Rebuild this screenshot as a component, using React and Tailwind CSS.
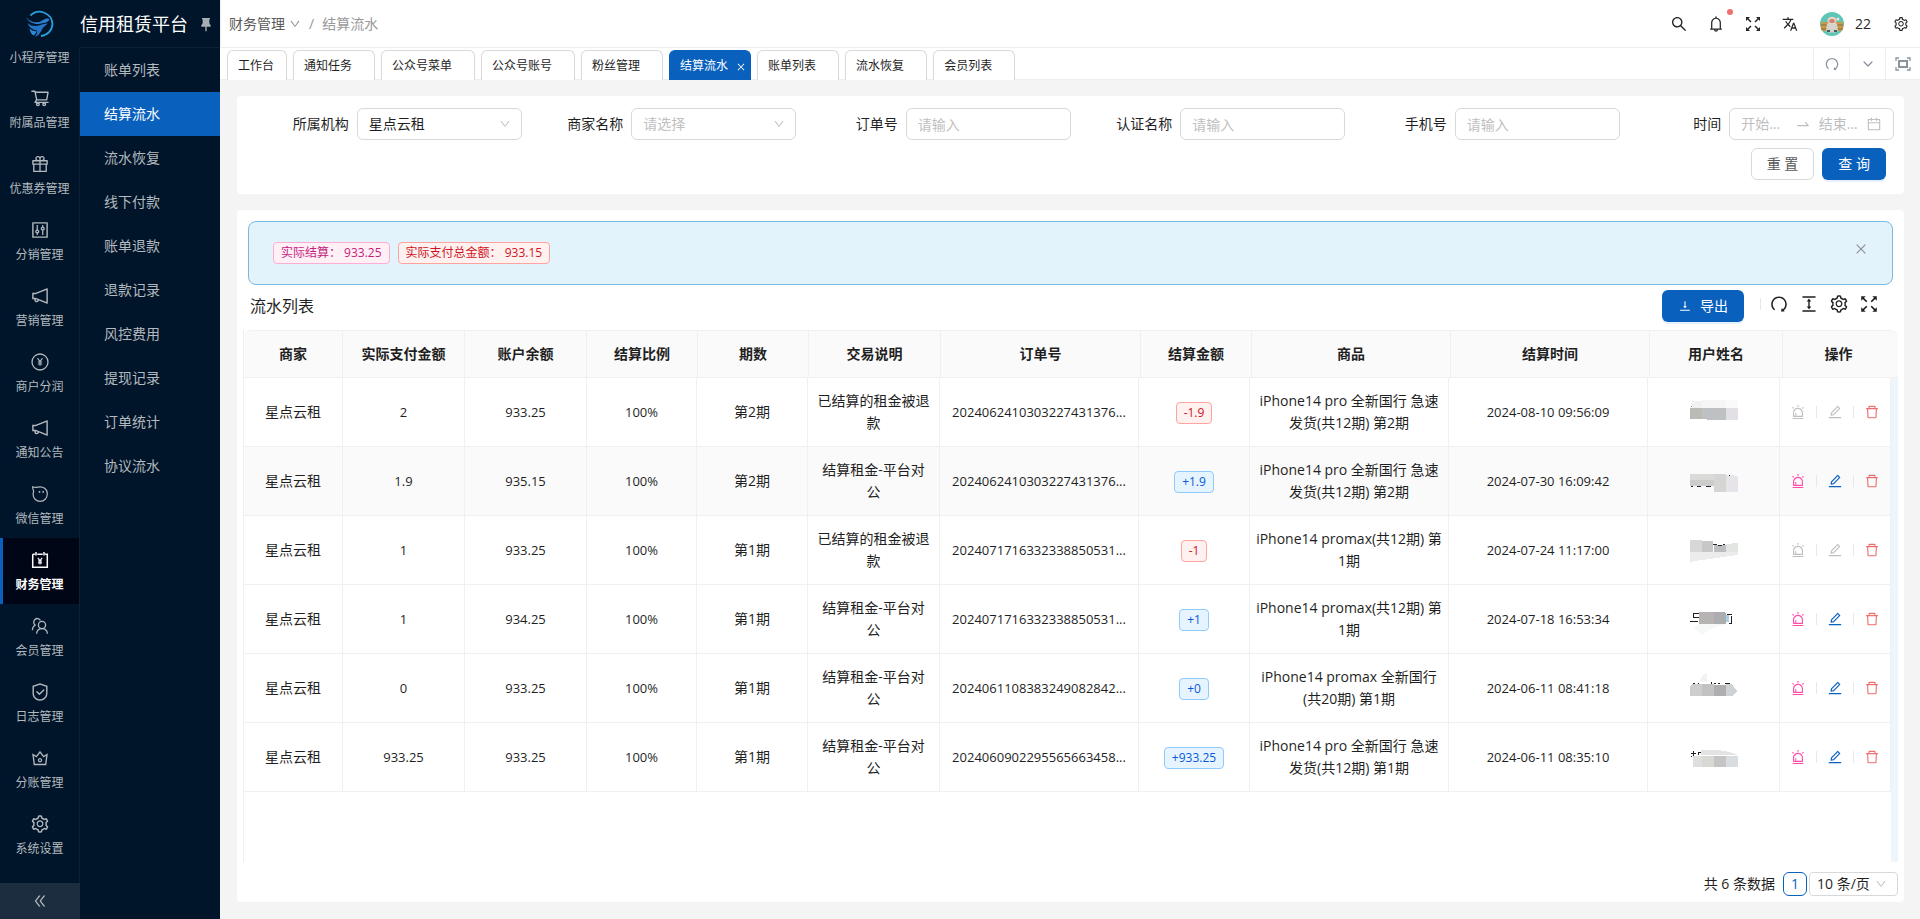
import React, { useState } from 'react';
import clsx from 'clsx';
import {
    AiOutlineAlert,
    AiOutlineBell,
    AiOutlineCalendar,
    AiOutlineClose,
    AiOutlineColumnHeight,
    AiOutlineControl,
    AiOutlineCrown,
    AiOutlineDelete,
    AiOutlineDoubleLeft,
    AiOutlineDown,
    AiOutlineEdit,
    AiOutlineGift,
    AiOutlineNotification,
    AiOutlineRedo,
    AiOutlineSafety,
    AiOutlineSearch,
    AiOutlineSetting,
    AiOutlineShoppingCart,
    AiOutlineSwapRight,
    AiOutlineVerticalAlignBottom
} from 'react-icons/ai';
import { IoChevronDown } from 'react-icons/io5';
import { MdTranslate } from 'react-icons/md';
import { RiPushpin2Fill } from 'react-icons/ri';

const YuanCircle = ({ className }) => (
    <svg viewBox="-1 -1 20 20" fill="none" stroke="currentColor" className={className}>
        <circle cx="9" cy="9" r="8" strokeWidth="1.3" />
        <path d="M6.5 5.2 9 8.6l2.5-3.4M9 8.6v4.2M6.8 9h4.4M6.8 11h4.4" strokeWidth="1.1" />
    </svg>
);

const Bubble = ({ className }) => (
    <svg viewBox="-1 -1 20 20" fill="none" stroke="currentColor" strokeWidth="1.2" className={className}>
        <path d="M1.6 1.8c1.8.7 3.4.7 5 .4 5.8-1.2 9.7 2 9.7 6.8 0 4.2-3.2 7.3-7.2 7.3-4.1 0-7-3.1-7-7 0-1.2.2-2 .6-2.9-.7-1.5-1-3-1.1-4.6Z" />
        <path d="M8.5 6v1.8M12.2 6v1.8" strokeWidth="1.5" />
    </svg>
);

const YuanCalendar = ({ className }) => (
    <svg viewBox="-1 -1 20 20" fill="none" stroke="currentColor" className={className}>
        <path d="M1.7 3.2h2.2M6.3 3.2h5.4M14.1 3.2h2.2v13H1.7v-13M5 1v3.4M13 1v3.4" strokeWidth="1.5" />
        <path d="M6.8 6.8 9 9.6l2.2-2.8M9 9.6v4M7 10h4M7 11.9h4" strokeWidth="1.1" />
    </svg>
);

const Members = ({ className }) => (
    <svg viewBox="-1 -1 20 20" fill="none" stroke="currentColor" strokeWidth="1.3" className={className}>
        <circle cx="11" cy="8" r="3.6" />
        <path d="M5.6 16.8c.2-3.2 2.5-5.2 5.4-5.2s5.2 2 5.4 5.2" />
        <path d="M9.4 3.3A3.6 3.6 0 1 0 4 7.9M1.4 13.2c.1-2.7 1.3-4.6 3.3-5.4" />
    </svg>
);

const ArrowsOut = ({ className }) => (
    <svg viewBox="0 0 18 18" fill="none" stroke="currentColor" strokeWidth="1.5" className={className}>
        <path d="M7 7 3 3M11 7l4-4M7 11l-4 4M11 11l4 4" />
        <path d="M2 2h4L2 6ZM16 2h-4l4 4ZM2 16h4l-4-4ZM16 16h-4l4-4Z" fill="currentColor" stroke="none" />
    </svg>
);

const ScreenFull = ({ className }) => (
    <svg viewBox="0 0 16 14" fill="none" stroke="currentColor" className={className}>
        <rect x="4" y="4" width="8" height="6" strokeWidth="2" />
        <path d="M1 4V1h3M12 1h3v3M15 10v3h-3M4 13H1v-3" strokeWidth="1.3" />
    </svg>
);

const Logo = () => (
    <svg viewBox="0 0 30 30" className="h-[30px] w-[30px]">
        <path d="M5.5 6.5A13 13 0 0 1 27.5 15a12.5 12.5 0 0 1-11.5 12" fill="none" stroke="#2a9fe0" strokeWidth="1.8" />
        <path d="M1 8c3 4 7 6 13 5 3-.5 4-3 8-3.5 2-.2 3 .8 2 2-3 3-8 2.5-10 3.500-5 .5-11-2-13-7Z" fill="#2c7fd0" />
        <path d="M2.5 14c3 3 8 4 13 2 3-1 5-1.500 7-1.500-1 2-4 3-5 5-1.500 3-3 7-8 8.500 2-2 3-4 2.500-6.500C8 21 4 18.500 2.500 14Z" fill="#2573c6" />
        <path d="M4.5 19.5c2 2 5 3 7 2.500-.5 2-1.500 3.500-3 4.500-2-1-3.500-4-4-7Z" fill="#2b8ad8" />
    </svg>
);

const Avatar = () => (
    <svg viewBox="0 0 24 24" className="h-6 w-6 rounded-full">
        <rect width="24" height="24" fill="#5fc5b6" />
        <path d="M1 10h22v9H1Z" fill="#c99a4e" />
        <path d="M1 13h22M1 17h22" stroke="#8f6a35" />
        <path d="M7 12c2-2 8-2 10 0l1 7c-2 2-10 2-12 0Z" fill="#d6d3cf" />
        <path d="M7 18h3v2H7ZM14 18h3v2h-3Z" fill="#4c5a55" />
        <ellipse cx="12" cy="8.5" rx="4.500" ry="3.800" fill="#ecd3c6" />
        <ellipse cx="12" cy="9" rx="2.800" ry="2" fill="#c98672" />
        <circle cx="18" cy="7" r="1.500" fill="#e9e4d8" />
    </svg>
);

const MENU = [
    { name: '小程序管理', Icon: null },
    { name: '附属品管理', Icon: AiOutlineShoppingCart },
    { name: '优惠券管理', Icon: AiOutlineGift },
    { name: '分销管理', Icon: AiOutlineControl },
    { name: '营销管理', Icon: AiOutlineNotification },
    { name: '商户分润', Icon: YuanCircle },
    { name: '通知公告', Icon: AiOutlineNotification },
    { name: '微信管理', Icon: Bubble },
    { name: '财务管理', Icon: YuanCalendar },
    { name: '会员管理', Icon: Members },
    { name: '日志管理', Icon: AiOutlineSafety },
    { name: '分账管理', Icon: AiOutlineCrown },
    { name: '系统设置', Icon: AiOutlineSetting }
];

const SUB_MENU = ['账单列表', '结算流水', '流水恢复', '线下付款', '账单退款', '退款记录', '风控费用', '提现记录', '订单统计', '协议流水'];

const TABS = ['工作台', '通知任务', '公众号菜单', '公众号账号', '粉丝管理', '结算流水', '账单列表', '流水恢复', '会员列表'];

// the header also spans the scrollbar gutter, so its columns differ slightly
const COLUMNS = [
    { title: '商家', head: 'w-[99px]', body: 'w-[99px]' },
    { title: '实际支付金额', head: 'w-[122px]', body: 'w-[122px]' },
    { title: '账户余额', head: 'w-[122px]', body: 'w-[122px]' },
    { title: '结算比例', head: 'w-[111px]', body: 'w-[110px]' },
    { title: '期数', head: 'w-[111px]', body: 'w-[111px]' },
    { title: '交易说明', head: 'w-[132px]', body: 'w-[132px]' },
    { title: '订单号', head: 'w-[200px]', body: 'w-[199px]' },
    { title: '结算金额', head: 'w-[111px]', body: 'w-[111px]' },
    { title: '商品', head: 'w-[199px]', body: 'w-[199px]' },
    { title: '结算时间', head: 'w-[199px]', body: 'w-[199px]' },
    { title: '用户姓名', head: 'w-[133px]', body: 'w-[132px]' },
    { title: '操作', head: 'w-[115px]', body: 'w-[111px]' }
];

const ROWS = [
    { paid: '2', balance: '933.25', period: '第2期', note: '已结算的租金被退款', order: '2024062410303227431376...', amount: '-1.9', goods: 'iPhone14 pro 全新国行 急速\n发货(共12期) 第2期', time: '2024-08-10 09:56:09' },
    { paid: '1.9', balance: '935.15', period: '第2期', note: '结算租金-平台对公', order: '2024062410303227431376...', amount: '+1.9', goods: 'iPhone14 pro 全新国行 急速\n发货(共12期) 第2期', time: '2024-07-30 16:09:42' },
    { paid: '1', balance: '933.25', period: '第1期', note: '已结算的租金被退款', order: '2024071716332338850531...', amount: '-1', goods: 'iPhone14 promax(共12期) 第\n1期', time: '2024-07-24 11:17:00' },
    { paid: '1', balance: '934.25', period: '第1期', note: '结算租金-平台对公', order: '2024071716332338850531...', amount: '+1', goods: 'iPhone14 promax(共12期) 第\n1期', time: '2024-07-18 16:53:34' },
    { paid: '0', balance: '933.25', period: '第1期', note: '结算租金-平台对公', order: '2024061108383249082842...', amount: '+0', goods: 'iPhone14 promax 全新国行\n(共20期) 第1期', time: '2024-06-11 08:41:18' },
    { paid: '933.25', balance: '933.25', period: '第1期', note: '结算租金-平台对公', order: '2024060902295565663458...', amount: '+933.25', goods: 'iPhone14 pro 全新国行 急速\n发货(共12期) 第1期', time: '2024-06-11 08:35:10' }
];

// [path, colour] pairs for the masked customer names
const MASKS = [
    [['M2 5h10v7H2Z', '#f2f2f2'], ['M12 4h24v8H12Z', '#f6f6f6'], ['M36 4h12v8H36Z', '#fafafa'], ['M0 12h12v11H0Z', '#bbbbb6'], ['M12 12h24v12H17v-1h-5Z', '#bec1c1'], ['M36 12h12v12H36Z', '#e3e0e5'], ['M1 10h1v1H1Z', '#b57a3a']],
    [['M0 9h24v6H0Z', '#dadad9'], ['M24 9h12v6H24Z', '#d5d5d4'], ['M0 15h24v6H0Z', '#cccdca'], ['M24 15h12v12H24Z', '#d5d5d4'], ['M36 10h7l5 2v15H36Z', '#e6e4e8'], ['M1 21h2v1H1ZM7 21h4v1H7ZM16 21h5v1h-5ZM39 10h1v1h-1Z', '#2b2b35']],
    [['M0 6h12v12H0Z', '#d8d6d7'], ['M12 7h11v11H12Z', '#c8c7c8'], ['M24 11h12v7H24Z', '#bbbfbf'], ['M36 10l12-1v9H36Z', '#e3e5e2'], ['M0 18h48v3L12 26l-8 1-4 2Z', '#ececec'], ['M23 10h4v1h-4ZM28 11h4v1h-4ZM33 10h2v1h-2Z', '#2b2b35']],
    [['M3 10h6v1H4v3h5v1H3ZM0 18h8v1H0Z', '#1f1f1f'], ['M9 9h15v12H9Z', '#b7b3b3'], ['M24 9h9l3 1v11H24Z', '#adadb0'], ['M37 11h5v1h-5ZM41 13h1v8h-3v-1h2Z', '#1f1f1f'], ['M36 12h3v7h-3Z', '#a9cfe6'], ['M8 21h27l-14 5-9 6-8-6Z', '#f7f8f8']],
    [['M11 5l4-3h2v8h-7Z', '#f2f2f2'], ['M3 11h2v1H3ZM8 11h1v2H8ZM21 10h1v3h-1ZM24 11h2v1h-2ZM28 11h2v1h-2ZM35 11h5v1h-5Z', '#1f1f1f'], ['M0 14l2-2h10v12H0Z', '#cfcdcb'], ['M12 12h12v12H12Z', '#c3c2c2'], ['M24 13h12v11H24Z', '#aeadaf'], ['M36 12h6l5 7-4 5h-7Z', '#cdd2d4']],
    [['M1 12h5v1H1ZM3 10h1v6H3ZM1 15h1v1H1ZM8 11h3v1H8ZM8 11h1v3H8ZM37 11h4v1h-4Z', '#1f1f1f'], ['M11 9h17l12 2 8 3H11Z', '#e3e3e4'], ['M3 15h9v11H3Z', '#dfdfe0'], ['M12 15h12v11H12Z', '#d8d8d4'], ['M24 15h12v11H24Z', '#c6c5c6'], ['M36 15h12v11H36Z', '#d9dde0']]
];

const NameMask = ({ shapes }) => (
    <svg viewBox="0 0 48 32" className="mx-auto h-8 w-12" shapeRendering="crispEdges">
        {shapes.map(([d, fill]) => (
            <path key={d} d={d} fill={fill} />
        ))}
    </svg>
);

const Tag = ({ color, children }) => (
    <span
        className={clsx(
            'inline-block h-[22px] rounded border px-[7px] text-xs leading-5 whitespace-pre',
            color === 'pink' && 'border-[#ffadd2] bg-[#fff0f6] text-[#c41d7f]',
            color === 'red' && 'border-[#ffa39e] bg-[#fff1f0] text-[#cf1322]',
            color === 'blue' && 'border-[#91caff] bg-[#e6f4ff] text-[#0958d9]'
        )}
    >
        {children}
    </span>
);

const fieldClass = 'h-8 w-full rounded-md border border-[#d9d9d9] bg-white px-[11px] text-sm placeholder:text-[#bfbfbf] outline-none';

const Field = ({ label, id, children }) => (
    <div className="grid grid-cols-[2fr_3fr] items-center">
        <label htmlFor={id} className="pr-2 text-right text-sm">{label}</label>
        <div className="relative">{children}</div>
    </div>
);

const SelectField = ({ label, id, options, muted }) => (
    <Field label={label} id={id}>
        <select id={id} className={clsx(fieldClass, 'appearance-none', muted && 'text-[#bfbfbf]')}>
            {options.map((option) => (
                <option key={option}>{option}</option>
            ))}
        </select>
        <AiOutlineDown className="pointer-events-none absolute top-[10px] right-[11px] h-3 w-3 text-[#bfbfbf]" />
    </Field>
);

const Sidebar = () => (
    <aside className="flex shrink-0 bg-[#001529] text-[#b3b9bf]">
        <div className="flex w-20 flex-col">
            <div className="flex h-12 shrink-0 items-center justify-center">
                <Logo />
            </div>
            <nav className="flex-1 overflow-hidden border-r border-[#0d2135]">
                {MENU.map(({ name, Icon }) => (
                    <a
                        key={name}
                        href="#"
                        className={clsx(
                            'flex flex-col items-center text-xs leading-5',
                            Icon ? 'h-[66px] gap-[5px] pt-3' : 'h-7',
                            name === '财务管理' && 'border-l-[3px] border-[#0960bd] bg-[#000616] pr-[3px] font-bold text-white'
                        )}
                    >
                        {Icon && <Icon className="h-5 w-5 shrink-0" />}
                        {name}
                    </a>
                ))}
            </nav>
            <button aria-label="收起菜单" className="flex h-9 items-center justify-center bg-[#1b2d3f]">
                <AiOutlineDoubleLeft className="h-4 w-4" />
            </button>
        </div>
        <div className="w-[140px]">
            <div className="flex h-12 items-center justify-between border-b border-[#0d2135] pr-1.5">
                <h1 className="text-lg text-white">信用租赁平台</h1>
                <RiPushpin2Fill className="h-4 w-4 text-[#a6adb4]" />
            </div>
            <nav>
                {SUB_MENU.map((name) => (
                    <a key={name} href="#" className={clsx('flex h-11 items-center pl-6 text-sm', name === '结算流水' && 'bg-[#0960bd] text-white')}>
                        {name}
                    </a>
                ))}
            </nav>
        </div>
    </aside>
);

const Header = () => (
    <header className="flex h-12 shrink-0 items-center justify-between border-b border-l border-[#eee] bg-white pr-[11px] pl-2">
        <nav className="flex items-center text-sm text-[#999]">
            <a href="#" className="flex items-center gap-1 text-[#595959]">
                财务管理 <AiOutlineDown className="h-3 w-3 text-[#8c8c8c]" />
            </a>
            <span className="mx-2">/</span>
            <span>结算流水</span>
        </nav>
        <div className="flex items-center text-[#262626]">
            <button aria-label="搜索" className="mr-[19px]"><AiOutlineSearch className="h-[18px] w-[18px]" /></button>
            <button aria-label="通知" className="relative mr-[19px]">
                <AiOutlineBell className="h-[18px] w-[18px]" />
                <span className="absolute -top-1.5 -right-2 h-1.5 w-1.5 rounded-full bg-[#ed6f6f]" />
            </button>
            <button aria-label="全屏" className="mr-5"><ArrowsOut className="h-[18px] w-[18px]" /></button>
            <button aria-label="语言" className="mr-[22px]"><MdTranslate className="h-4 w-4" /></button>
            <Avatar />
            <span className="mr-[22px] ml-[11px] text-sm">22</span>
            <button aria-label="设置"><AiOutlineSetting className="h-4 w-4" /></button>
        </div>
    </header>
);

const TabBar = ({ active, onSelect }) => (
    <div className="flex h-8 shrink-0 items-end justify-between border-b border-[#eee] bg-white pl-[7px]">
        <div className="-mb-px flex gap-1.5">
            {TABS.map((name) => (
                <button
                    key={name}
                    onClick={() => onSelect(name)}
                    className={clsx(
                        'flex h-[30px] items-center rounded-t-md border border-b-0 pl-[10px] text-xs',
                        name === active ? 'border-[#0960bd] bg-[#0960bd] pr-1 text-white' : 'border-[#d9d9d9] bg-white text-[#1f1f1f]',
                        name !== active && (name === '工作台' ? 'pr-3' : 'pr-[22px]')
                    )}
                >
                    {name}
                    {name === active && <AiOutlineClose className="mt-0.5 ml-2 h-[10px] w-[10px]" />}
                </button>
            ))}
        </div>
        <div className="flex h-[30px] text-[#8b93a1]">
            <button aria-label="刷新" className="flex w-9 items-center justify-center border-l border-[#eee]"><AiOutlineRedo className="h-4 w-4" /></button>
            <button aria-label="更多" className="flex w-9 items-center justify-center border-l border-[#eee]"><IoChevronDown className="h-[14px] w-[14px]" /></button>
            <button aria-label="内容全屏" className="flex w-[35px] items-center justify-center border-l border-[#eee]"><ScreenFull className="h-[14px] w-4" /></button>
        </div>
    </div>
);

const SearchForm = () => (
    <form className="rounded-sm bg-white px-[10px] pt-3 pb-[14px]" onSubmit={(e) => e.preventDefault()}>
        <div className="grid grid-cols-6">
            <SelectField label="所属机构" id="org" options={['星点云租']} />
            <SelectField label="商家名称" id="merchant" options={['请选择']} muted />
            <Field label="订单号" id="orderNo"><input id="orderNo" className={fieldClass} placeholder="请输入" /></Field>
            <Field label="认证名称" id="realName"><input id="realName" className={fieldClass} placeholder="请输入" /></Field>
            <Field label="手机号" id="phone"><input id="phone" className={fieldClass} placeholder="请输入" /></Field>
            <Field label="时间" id="startDate">
                <div className="flex h-8 items-center rounded-md border border-[#d9d9d9] px-[11px] text-sm text-[#bfbfbf]">
                    <input id="startDate" className="w-0 flex-1 text-ellipsis outline-none placeholder:text-[#bfbfbf]" placeholder="开始日期" />
                    <AiOutlineSwapRight className="mx-2 h-4 w-4 shrink-0" />
                    <input aria-label="结束时间" className="w-0 flex-1 text-ellipsis outline-none placeholder:text-[#bfbfbf]" placeholder="结束日期" />
                    <AiOutlineCalendar className="ml-0.5 h-4 w-4 shrink-0" />
                </div>
            </Field>
        </div>
        <div className="mt-2 flex justify-end gap-2 pr-2">
            <button type="reset" className="h-8 rounded-md border border-[#d9d9d9] px-[15px] text-sm whitespace-pre text-[#595959]">重 置</button>
            <button type="submit" className="h-8 rounded-md bg-[#0960bd] px-4 text-sm whitespace-pre text-white shadow-[0_2px_0_rgba(5,115,255,0.1)]">查 询</button>
        </div>
    </form>
);

const Columns = ({ part }) => (
    <colgroup>
        {COLUMNS.map((column) => (
            <col key={column.title} className={column[part]} />
        ))}
    </colgroup>
);

const Divider = () => <span className="mx-[10px] h-3 w-px bg-[#e8e8e8]" />;

const RecordTable = () => (
    <div className="flex flex-1 flex-col border-l border-[#f0f0f0]">
        <table className="w-full table-fixed border-separate border-spacing-0 text-sm">
            <Columns part="head" />
            <thead>
                <tr>
                    {COLUMNS.map(({ title }) => (
                        <th key={title} className="h-12 border-t border-r border-b border-[#f0f0f0] bg-[#fafafa] font-bold first:rounded-tl-lg last:rounded-tr-lg last:border-r-0 last:pr-1">
                            {title}
                        </th>
                    ))}
                </tr>
            </thead>
        </table>
        <div className="flex-1 border-r-[7px] border-r-[#eef6fc]">
            <table aria-label="流水列表" className="w-full table-fixed border-separate border-spacing-0 text-center text-sm leading-[22px]">
                <Columns part="body" />
                <tbody className="[&_td]:border-r [&_td]:border-b [&_td]:border-[#f0f0f0] [&_td]:px-2 [&_td]:py-3">
                    {ROWS.map((row, i) => {
                        const locked = row.amount.startsWith('-');
                        return (
                            <tr key={row.time} className={clsx('h-[69px]', i === 1 && 'bg-[#fafafa]')}>
                                <td>星点云租</td>
                                <td className="text-[13px]">{row.paid}</td>
                                <td className="text-[13px]">{row.balance}</td>
                                <td className="text-[13px]">100%</td>
                                <td>{row.period}</td>
                                <td>{row.note}</td>
                                <td className="text-[13px] whitespace-nowrap">{row.order}</td>
                                <td><Tag color={locked ? 'red' : 'blue'}>{row.amount}</Tag></td>
                                <td><div className="-mx-1 whitespace-pre">{row.goods}</div></td>
                                <td className="text-[13px] whitespace-nowrap">{row.time}</td>
                                <td><NameMask shapes={MASKS[i]} /></td>
                                <td>
                                    <div className="flex items-center justify-center">
                                        <button aria-label="提醒" disabled={locked} className="text-[#ff4da9] disabled:text-[#bfbfbf]"><AiOutlineAlert className="h-4 w-4" /></button>
                                        <Divider />
                                        <button aria-label="编辑" disabled={locked} className="text-[#0960bd] disabled:text-[#bfbfbf]"><AiOutlineEdit className="h-4 w-4" /></button>
                                        <Divider />
                                        <button aria-label="删除" className="text-[#ed6f6f]"><AiOutlineDelete className="h-4 w-4" /></button>
                                    </div>
                                </td>
                            </tr>
                        );
                    })}
                </tbody>
            </table>
        </div>
    </div>
);

const App = () => {
    const [activeTab, setActiveTab] = useState('结算流水');

    return (
        <div className="flex min-h-screen bg-[#f4f4f4] font-['Open_Sans','Noto_Sans_CJK_SC',sans-serif] text-[#1f1f1f] [&_button]:cursor-pointer">
            <Sidebar />
            <div className="flex min-w-0 flex-1 flex-col">
                <Header />
                <TabBar active={activeTab} onSelect={setActiveTab} />
                <main className="flex flex-1 flex-col gap-4 px-4 pt-4 pb-[17px] pl-[17px]">
                    <SearchForm />
                    <section className="flex flex-1 flex-col rounded-sm bg-white px-1.5 pt-[11px] pb-1.5">
                        <div className="mx-[5px] flex h-16 items-center gap-2 rounded-lg border border-[#7ab8e0] bg-[#e2f3fc] px-6">
                            <Tag color="pink">实际结算： 933.25</Tag>
                            <Tag color="red">实际支付总金额： 933.15</Tag>
                            <button aria-label="关闭" className="mb-2 ml-auto text-[#8c8c8c]"><AiOutlineClose className="h-[14px] w-[14px]" /></button>
                        </div>
                        <div className="flex items-center px-[7px] pt-[5px] pb-2">
                            <h2 className="flex-1 text-base">流水列表</h2>
                            <button className="flex h-8 items-center gap-2 rounded-md bg-[#0960bd] px-4 text-sm text-white shadow-[0_2px_0_rgba(5,115,255,0.1)]">
                                <AiOutlineVerticalAlignBottom className="h-[14px] w-[14px]" />
                                导出
                            </button>
                            <div className="mb-1 ml-4 flex items-center gap-[10px] pr-3">
                                <span className="-mr-0.5 h-3 w-px bg-[#e8e8e8]" />
                                <button aria-label="刷新"><AiOutlineRedo className="h-5 w-5" /></button>
                                <button aria-label="密度"><AiOutlineColumnHeight className="h-5 w-5" /></button>
                                <button aria-label="列设置"><AiOutlineSetting className="h-5 w-5" /></button>
                                <button aria-label="全屏"><ArrowsOut className="h-5 w-5" /></button>
                            </div>
                        </div>
                        <RecordTable />
                        <div className="mt-[10px] flex items-center justify-end text-sm">
                            <span className="mr-2">共 6 条数据</span>
                            <button className="h-6 w-6 rounded-md border border-[#0960bd] text-[#0960bd]">1</button>
                            <div className="relative ml-0.5">
                                <select aria-label="每页条数" className="h-6 w-[89px] appearance-none rounded border border-[#d9d9d9] bg-white pl-[7px] outline-none">
                                    <option>10 条/页</option>
                                </select>
                                <AiOutlineDown className="pointer-events-none absolute top-1.5 right-[11px] h-3 w-3 text-[#bfbfbf]" />
                            </div>
                        </div>
                    </section>
                </main>
            </div>
        </div>
    );
};

export default App;
